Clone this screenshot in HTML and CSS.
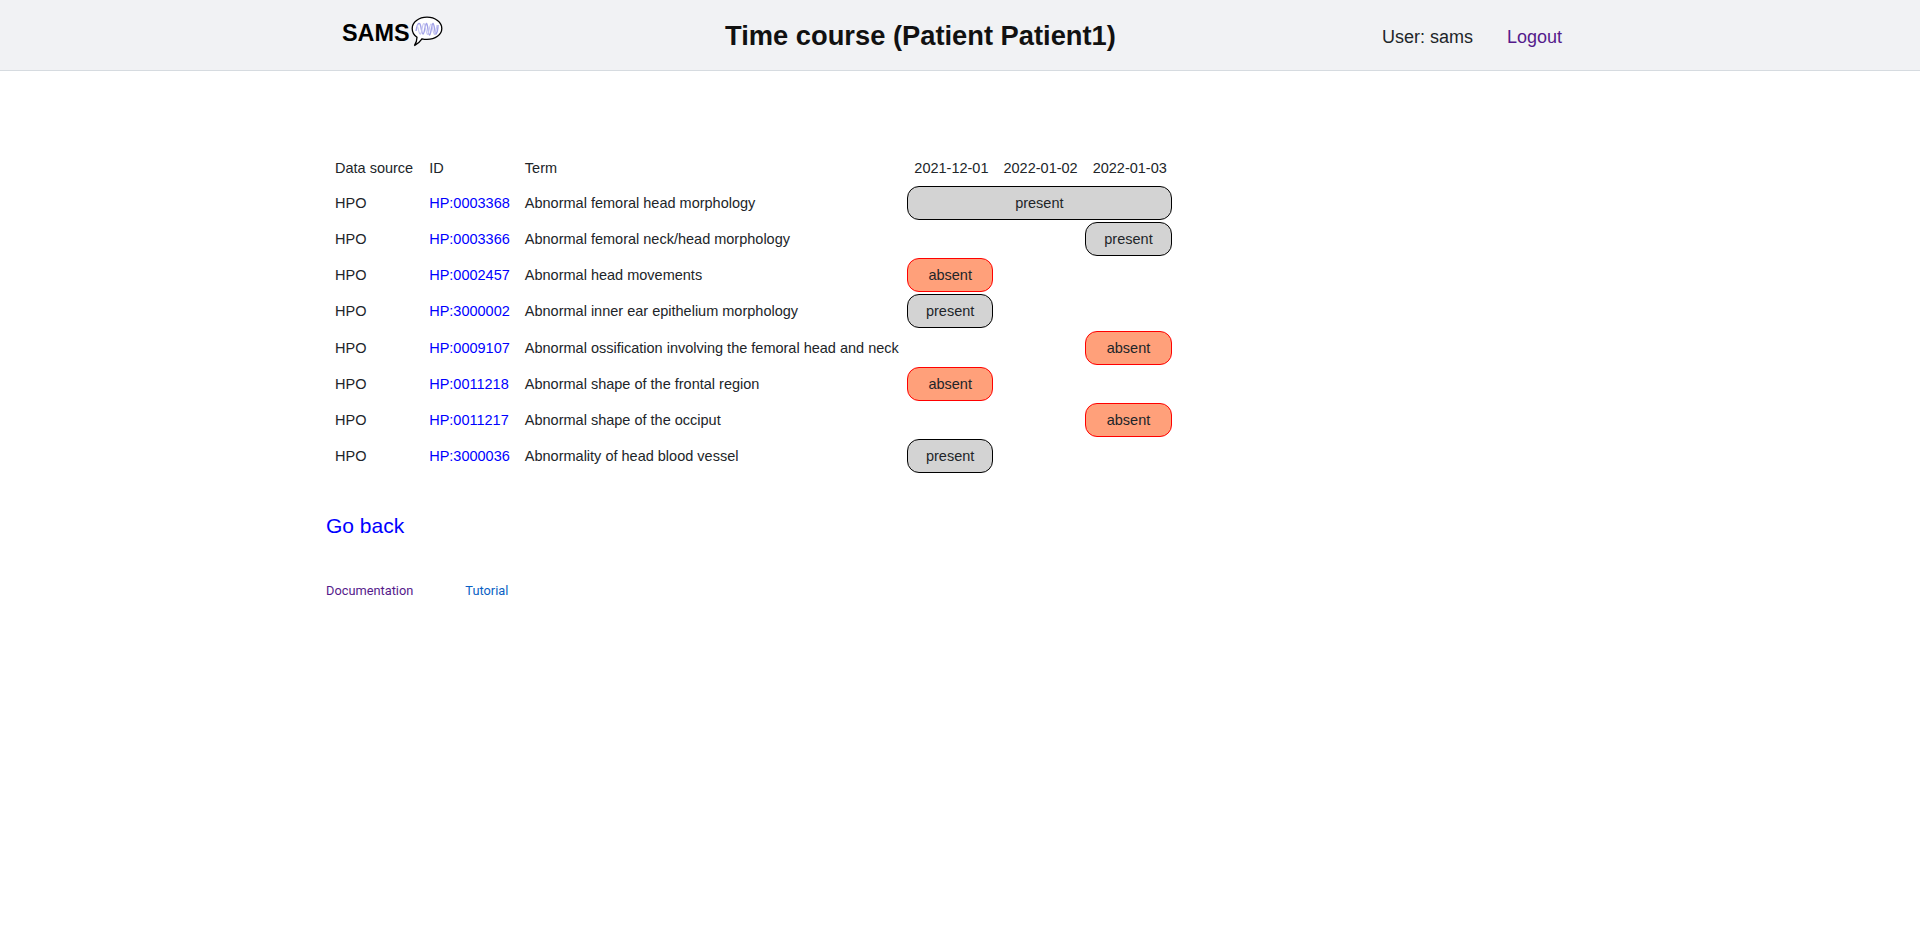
FILE: index.html
```html
<!DOCTYPE html>
<html lang="en">
<head>
<meta charset="utf-8">
<title>Time course</title>
<link rel="stylesheet" href="styles.css">
</head>
<body>
<header class="navbar">
  <div class="navbar-inner">
    <a class="brand" href="#">
      <span class="brand-name">SAMS</span>
      <svg class="brand-icon" width="32" height="31" viewBox="0 0 32 31" aria-hidden="true">
        <path d="M16 1.2C24.2 1.2 30.8 6.3 30.8 12.4C30.8 18.6 24.2 23.4 16 23.4C14.2 23.4 12.6 23.2 11 22.8C9.2 25.4 6.8 27.8 3.4 29.6C5 27.2 6 24.4 6 21.2C2.9 19.1 1.2 15.9 1.2 12.4C1.2 6.3 7.800 1.2 16 1.2Z" fill="#fff" stroke="#000" stroke-width="1.300"/>
        <path d="M5 15C6 9 7.500 6 9 8C10.500 11 10.500 18 12 18C13.500 18 14 8 15.500 7.500C17 8 17 19 18.500 19C20 19 20.500 8 22 7.500C23.500 8 24 19 25 18C26.500 16 27 11 27 9" fill="none" stroke="#a3a3e8" stroke-width="1.400"/>
        <path d="M6 9C7.500 12 8 19 9.500 18C11 16 11.500 7 13 7.500C14.500 8 15 18 16.500 18.500C18 18 18.500 8 20 8C21.500 8 22 18 23.500 18.500C25 17 25.500 11 26 9" fill="none" stroke="#c6c6f0" stroke-width="1.100"/>
      </svg>
    </a>
    <h1 class="page-title">Time course (Patient Patient1)</h1>
    <div class="user-area">
      <span class="user-name">User: sams</span>
      <a class="logout" href="#">Logout</a>
    </div>
  </div>
</header>
<main class="content">
  <table class="timeline">
    <thead>
      <tr><th>Data source</th><th class="id-col">ID</th><th>Term</th><th class="date">2021-12-01</th><th class="date">2022-01-02</th><th class="date">2022-01-03</th></tr>
    </thead>
    <tbody>
      <tr><td>HPO</td><td class="id-col"><a href="#">HP:0003368</a></td><td>Abnormal femoral head morphology</td><td class="cell-pill" colspan="3"><span class="pill present">present</span></td></tr>
      <tr><td>HPO</td><td class="id-col"><a href="#">HP:0003366</a></td><td>Abnormal femoral neck/head morphology</td><td class="cell-pill" colspan="2"></td><td class="cell-pill"><span class="pill present">present</span></td></tr>
      <tr><td>HPO</td><td class="id-col"><a href="#">HP:0002457</a></td><td>Abnormal head movements</td><td class="cell-pill"><span class="pill absent">absent</span></td><td class="cell-pill" colspan="2"></td></tr>
      <tr><td>HPO</td><td class="id-col"><a href="#">HP:3000002</a></td><td>Abnormal inner ear epithelium morphology</td><td class="cell-pill"><span class="pill present">present</span></td><td class="cell-pill" colspan="2"></td></tr>
      <tr><td>HPO</td><td class="id-col"><a href="#">HP:0009107</a></td><td>Abnormal ossification involving the femoral head and neck</td><td class="cell-pill" colspan="2"></td><td class="cell-pill"><span class="pill absent">absent</span></td></tr>
      <tr><td>HPO</td><td class="id-col"><a href="#">HP:0011218</a></td><td>Abnormal shape of the frontal region</td><td class="cell-pill"><span class="pill absent">absent</span></td><td class="cell-pill" colspan="2"></td></tr>
      <tr><td>HPO</td><td class="id-col"><a href="#">HP:0011217</a></td><td>Abnormal shape of the occiput</td><td class="cell-pill" colspan="2"></td><td class="cell-pill"><span class="pill absent">absent</span></td></tr>
      <tr><td>HPO</td><td class="id-col"><a href="#">HP:3000036</a></td><td>Abnormality of head blood vessel</td><td class="cell-pill"><span class="pill present">present</span></td><td class="cell-pill" colspan="2"></td></tr>
    </tbody>
  </table>
  <a class="go-back" href="#">Go back</a>
  <nav class="footer-links">
    <a class="doc-link" href="#">Documentation</a>
    <a class="tutorial-link" href="#">Tutorial</a>
  </nav>
</main>
</body>
</html>
```
FILE: styles.css
```css
* { box-sizing: border-box; }
html, body { margin: 0; padding: 0; }
body {
  background: #fff;
  color: #000;
  font-family: "Liberation Sans", Arial, sans-serif;
}
a { text-decoration: none; }

.navbar {
  height: 71px;
  background: #f1f2f4;
  border-bottom: 1px solid #d6dbe0;
}
.navbar-inner {
  height: 70px;
  width: 1240px;
  margin-left: 342px;
  display: flex;
  align-items: center;
}
.brand {
  display: flex;
  align-items: flex-start;
  color: #000;
  width: 383px;
  height: 70px;
  padding-top: 16px;
}
.brand-name {
  padding-top: 1px;
  font-size: 23.400px;
  font-weight: 700;
  line-height: 33px;
}
.brand-icon { margin-left: 1px; }
.page-title {
  margin: 0;
  width: 657px;
  padding-top: 2px;
  font-size: 27.300px;
  font-weight: 700;
  line-height: 1.2;
  color: #111;
}
.user-area {
  display: flex;
  gap: 34px;
  padding-top: 3px;
  font-size: 18px;
  line-height: 24px;
}
.user-name { color: #212529; }
.logout { color: #551a8b; }

.content { padding: 79px 0 0 327px; }
.timeline {
  border-collapse: separate;
  border-spacing: 0;
  color: #212529;
  font-size: 14.500px;
  line-height: 18px;
}
.timeline th {
  font-weight: 400;
  text-align: left;
  padding: 0 8px;
  height: 35px;
  white-space: nowrap;
}
.timeline th.date { padding: 0 7.500px; }
.timeline td {
  padding: 0 8px;
  height: 36.150px;
  white-space: nowrap;
}
.timeline td.cell-pill {
  padding: 0 2.500px 0 0;
}
.timeline th.id-col, .timeline td.id-col { padding-right: 7px; }
.timeline a { color: #0000ff; }
.pill {
  display: block;
  height: 34px;
  line-height: 32px;
  text-align: center;
  border-radius: 12px;
  border: 1.500px solid #000;
}
.present { background: #d3d3d3; border-color: #000; }
.absent { background: #ffa07a; border-color: #ff0000; }

.go-back {
  display: block;
  margin-top: 38px;
  margin-left: -1px;
  font-size: 21px;
  line-height: 28px;
  color: #0000ff;
}
.footer-links {
  display: flex;
  gap: 52px;
  margin-top: 42px;
  margin-left: -1px;
  font-family: Roboto, sans-serif;
  font-size: 12.800px;
  line-height: 18px;
}
.doc-link { color: #551a8b; }
.tutorial-link { color: #0a5fc4; }
```
